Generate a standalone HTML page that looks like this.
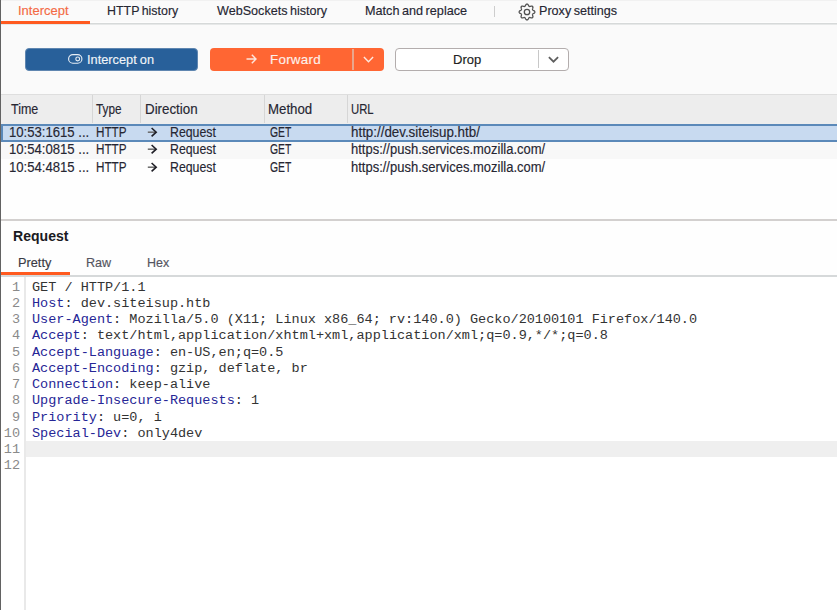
<!DOCTYPE html>
<html><head><meta charset="utf-8">
<style>
*{margin:0;padding:0;box-sizing:border-box}
html,body{width:837px;height:610px;overflow:hidden;background:#fafafa;font-family:"Liberation Sans",sans-serif;color:#262632}
.a{position:absolute;white-space:nowrap}
#lb{left:0;top:0;width:1px;height:610px;background:#626262}
.tab{font-size:13px}
.btn{position:absolute;height:22px;border-radius:4px;font-size:13px}
.hdr{font-size:13.8px}
.cell{font-size:13.8px}
.code{font-family:"Liberation Mono",monospace;font-size:13.5px}
.bt{font-size:13px;line-height:13px;margin-top:1px;word-spacing:-0.5px}
.tab,.hdr,.cell,.sub{line-height:13px}
.tab,.hdr,.cell,.sub,.bt{-webkit-text-stroke:0.15px}
.sub{font-size:12.7px;margin-top:1px}
.hd2{font-size:15px;font-weight:bold;line-height:15px;color:#1a1a22}
#gut,#code{font-family:"Liberation Mono",monospace;font-size:13.53px;line-height:16.26px}
#gut{color:#8a8a8a}
.k{color:#262696}.v{color:#333}
</style></head><body>
<div class="a" id="lb"></div><div class="a" style="left:1px;top:0;width:836px;height:1px;background:#f1f1f1"></div>
<!-- top tabs -->
<div class="a tab" style="left:17.90px;top:4px;color:#f46a45;transform:scaleX(0.9985);transform-origin:0 0">Intercept</div>

<div class="a tab" style="left:107.04px;top:4px;word-spacing:-1px;transform:scaleX(0.9550);transform-origin:0 0">HTTP history</div>
<div class="a tab" style="left:216.80px;top:4px;word-spacing:-1px;transform:scaleX(0.9690);transform-origin:0 0">WebSockets history</div>
<div class="a tab" style="left:364.63px;top:4px;word-spacing:-1px;transform:scaleX(0.9728);transform-origin:0 0">Match and replace</div>
<div class="a" style="left:494px;top:6px;width:1px;height:11px;background:#cdcdcd"></div>
<svg class="a" style="left:518px;top:3.2px" width="18" height="18" viewBox="0 0 18 18"><path d="M16.80 9.00 L16.79 9.31 L16.78 9.61 L16.52 9.89 L16.19 10.14 L15.82 10.36 L15.44 10.55 L15.09 10.72 L14.80 10.89 L14.72 11.11 L14.64 11.33 L14.54 11.55 L14.44 11.77 L14.52 12.09 L14.65 12.46 L14.78 12.86 L14.89 13.28 L14.95 13.69 L14.93 14.07 L14.73 14.29 L14.52 14.52 L14.29 14.73 L14.07 14.93 L13.69 14.95 L13.28 14.89 L12.86 14.78 L12.46 14.65 L12.09 14.52 L11.77 14.44 L11.55 14.54 L11.33 14.64 L11.11 14.72 L10.89 14.80 L10.72 15.09 L10.55 15.44 L10.36 15.82 L10.14 16.19 L9.89 16.52 L9.61 16.78 L9.31 16.79 L9.00 16.80 L8.69 16.79 L8.39 16.78 L8.11 16.52 L7.86 16.19 L7.64 15.82 L7.45 15.44 L7.28 15.09 L7.11 14.80 L6.89 14.72 L6.67 14.64 L6.45 14.54 L6.23 14.44 L5.91 14.52 L5.54 14.65 L5.14 14.78 L4.72 14.89 L4.31 14.95 L3.93 14.93 L3.71 14.73 L3.48 14.52 L3.27 14.29 L3.07 14.07 L3.05 13.69 L3.11 13.28 L3.22 12.86 L3.35 12.46 L3.48 12.09 L3.56 11.77 L3.46 11.55 L3.36 11.33 L3.28 11.11 L3.20 10.89 L2.91 10.72 L2.56 10.55 L2.18 10.36 L1.81 10.14 L1.48 9.89 L1.22 9.61 L1.21 9.31 L1.20 9.00 L1.21 8.69 L1.22 8.39 L1.48 8.11 L1.81 7.86 L2.18 7.64 L2.56 7.45 L2.91 7.28 L3.20 7.11 L3.28 6.89 L3.36 6.67 L3.46 6.45 L3.56 6.23 L3.48 5.91 L3.35 5.54 L3.22 5.14 L3.11 4.72 L3.05 4.31 L3.07 3.93 L3.27 3.71 L3.48 3.48 L3.71 3.27 L3.93 3.07 L4.31 3.05 L4.72 3.11 L5.14 3.22 L5.54 3.35 L5.91 3.48 L6.23 3.56 L6.45 3.46 L6.67 3.36 L6.89 3.28 L7.11 3.20 L7.28 2.91 L7.45 2.56 L7.64 2.18 L7.86 1.81 L8.11 1.48 L8.39 1.22 L8.69 1.21 L9.00 1.20 L9.31 1.21 L9.61 1.22 L9.89 1.48 L10.14 1.81 L10.36 2.18 L10.55 2.56 L10.72 2.91 L10.89 3.20 L11.11 3.28 L11.33 3.36 L11.55 3.46 L11.77 3.56 L12.09 3.48 L12.46 3.35 L12.86 3.22 L13.28 3.11 L13.69 3.05 L14.07 3.07 L14.29 3.27 L14.52 3.48 L14.73 3.71 L14.93 3.93 L14.95 4.31 L14.89 4.72 L14.78 5.14 L14.65 5.54 L14.52 5.91 L14.44 6.23 L14.54 6.45 L14.64 6.67 L14.72 6.89 L14.80 7.11 L15.09 7.28 L15.44 7.45 L15.82 7.64 L16.19 7.86 L16.52 8.11 L16.78 8.39 L16.79 8.69Z" fill="none" stroke="#505050" stroke-width="1.25" stroke-linejoin="round"/><circle cx="9" cy="9" r="2.7" fill="none" stroke="#505050" stroke-width="1.3"/></svg>
<div class="a tab" style="left:539.43px;top:4px;word-spacing:-1px;transform:scaleX(0.9683);transform-origin:0 0">Proxy settings</div>
<div class="a" style="left:1px;top:22px;width:836px;height:1px;background:#fdfdfd"></div><div class="a" style="left:1px;top:23px;width:836px;height:1px;background:#d6d9d9"></div><div class="a" style="left:1px;top:24px;width:836px;height:1px;background:#e6e8e8"></div><div class="a" style="left:1px;top:21px;width:89px;height:3px;background:#ff5a1f"></div>

<!-- buttons -->
<div class="btn" style="left:25px;top:48px;width:173px;height:22.5px;background:#28609a;border:1px solid #5f86b0"></div>
<div class="btn" style="left:210px;top:48px;width:174px;height:22.5px;background:#ff6633"></div>
<div class="a" style="left:352px;top:49px;width:2px;height:21px;background:#e9a68d"></div>
<div class="btn" style="left:395px;top:48px;width:174px;height:22.5px;background:#fff;border:1px solid #b3adad"></div>
<div class="a" style="left:538px;top:50px;width:1px;height:18px;background:#c8c8c8"></div>

<!-- table header -->
<div class="a" style="left:1px;top:94px;width:836px;height:30px;background:#ededed;border-top:1px solid #dedede"></div>
<div class="a" style="left:92px;top:95px;width:1px;height:28px;background:#d6d6d6"></div>
<div class="a" style="left:140px;top:95px;width:1px;height:28px;background:#d6d6d6"></div>
<div class="a" style="left:264px;top:95px;width:1px;height:28px;background:#d6d6d6"></div>
<div class="a" style="left:347px;top:95px;width:1px;height:28px;background:#d6d6d6"></div>

<!-- rows -->
<div class="a" style="left:1px;top:124px;width:837px;height:18px;background:#c8daf0;border:2px solid #5b89b9;border-right:0"></div>
<div class="a" style="left:1px;top:142px;width:836px;height:17px;background:#f8f8f8"></div>
<div class="a" style="left:1px;top:159px;width:836px;height:60px;background:#fefefe"></div>
<div class="a" style="left:1px;top:219px;width:836px;height:2px;background:#d3d0cf"></div>

<!-- request section -->
<div class="a" style="left:1px;top:221px;width:836px;height:54px;background:#fefefe"></div>
<div class="a hd2" style="left:12.86px;top:228px;transform:scaleX(0.9367);transform-origin:0 0">Request</div>

<div class="a" style="left:1px;top:275px;width:836px;height:2px;background:#d6d9da"></div>
<div class="a" style="left:1px;top:277px;width:836px;height:333px;background:#fff"></div>
<div class="a" style="left:24px;top:277px;width:2px;height:333px;background:#e9e9e9"></div>
<div class="a" style="left:1px;top:272.4px;width:69px;height:2.6px;background:#ff5a1f"></div>
<div class="a" style="left:26px;top:441px;width:811px;height:16px;background:#efefef"></div>

<!-- button contents -->
<svg class="a" style="left:68px;top:54.3px" width="15" height="10" viewBox="0 0 15 10"><rect x="0.6" y="0.6" width="13.3" height="8.6" rx="4.3" fill="none" stroke="#e6edf5" stroke-width="1.15"/><circle cx="9.7" cy="4.9" r="1.9" fill="none" stroke="#e6edf5" stroke-width="1.15"/></svg>
<div class="a bt" style="left:87.02px;top:52px;color:#f0f4f8;transform:scaleX(0.9832);transform-origin:0 0">Intercept on</div>
<svg class="a" style="left:246px;top:54px" width="11" height="10" viewBox="0 0 11 10"><path d="M0.5 5H10M5.8 0.8l4.2 4.2-4.2 4.2" fill="none" stroke="#fde5dc" stroke-width="1.45"/></svg>
<div class="a bt" style="left:270px;top:52px;color:#fdf0ea;font-size:13.4px;letter-spacing:0.25px">Forward</div>
<svg class="a" style="left:363px;top:56px" width="11" height="7" viewBox="0 0 11 7"><path d="M0.9 1.1l4.6 4.6L10.1 1.1" fill="none" stroke="#fde9e0" stroke-width="1.45"/></svg>
<div class="a bt" style="left:452.80px;top:52px;color:#222;transform:scaleX(1.0020);transform-origin:0 0">Drop</div>
<svg class="a" style="left:548px;top:56px" width="11" height="7" viewBox="0 0 11 7"><path d="M0.9 1.1l4.6 4.6L10.1 1.1" fill="none" stroke="#5e5e5e" stroke-width="1.75"/></svg>

<!-- header text -->
<div class="a hdr" style="left:10.90px;top:103px;transform:scaleX(0.9057);transform-origin:0 0">Time</div>
<div class="a hdr" style="left:96.20px;top:103px;transform:scaleX(0.8532);transform-origin:0 0">Type</div>
<div class="a hdr" style="left:144.93px;top:103px;transform:scaleX(0.9665);transform-origin:0 0">Direction</div>
<div class="a hdr" style="left:268.44px;top:103px;transform:scaleX(0.9606);transform-origin:0 0">Method</div>
<div class="a hdr" style="left:350.58px;top:103px;transform:scaleX(0.8207);transform-origin:0 0">URL</div>

<!-- row text -->
<div class="a cell" style="left:9.05px;top:126px;transform:scaleX(0.9509);transform-origin:0 0">10:53:1615 ...</div>
<div class="a cell" style="left:95.65px;top:126px;transform:scaleX(0.8472);transform-origin:0 0">HTTP</div>
<svg class="a" style="left:146.5px;top:127px" width="11" height="11" viewBox="0 0 11 11"><path d="M0.8 5.2H9" stroke="#6a6a6a" stroke-width="1.5" fill="none"/><path d="M4.6 1L9.2 5.2L4.6 9.4" stroke="#1e1e26" stroke-width="1.6" fill="none"/></svg>
<div class="a cell" style="left:170.01px;top:126px;transform:scaleX(0.8921);transform-origin:0 0">Request</div>
<div class="a cell" style="left:269.50px;top:126px;transform:scaleX(0.7534);transform-origin:0 0">GET</div>
<div class="a cell" style="left:351.40px;top:126px;transform:scaleX(0.9673);transform-origin:0 0">http://dev.siteisup.htb/</div>

<div class="a cell" style="left:9.05px;top:143px;transform:scaleX(0.9509);transform-origin:0 0">10:54:0815 ...</div>
<div class="a cell" style="left:95.65px;top:143px;transform:scaleX(0.8472);transform-origin:0 0">HTTP</div>
<svg class="a" style="left:146.5px;top:144px" width="11" height="11" viewBox="0 0 11 11"><path d="M0.8 5.2H9" stroke="#6a6a6a" stroke-width="1.5" fill="none"/><path d="M4.6 1L9.2 5.2L4.6 9.4" stroke="#1e1e26" stroke-width="1.6" fill="none"/></svg>
<div class="a cell" style="left:170.01px;top:143px;transform:scaleX(0.8921);transform-origin:0 0">Request</div>
<div class="a cell" style="left:269.50px;top:143px;transform:scaleX(0.7534);transform-origin:0 0">GET</div>
<div class="a cell" style="left:351.40px;top:143px;transform:scaleX(0.9413);transform-origin:0 0">https://push.services.mozilla.com/</div>

<div class="a cell" style="left:9.05px;top:161px;transform:scaleX(0.9509);transform-origin:0 0">10:54:4815 ...</div>
<div class="a cell" style="left:95.65px;top:161px;transform:scaleX(0.8472);transform-origin:0 0">HTTP</div>
<svg class="a" style="left:146.5px;top:162px" width="11" height="11" viewBox="0 0 11 11"><path d="M0.8 5.2H9" stroke="#6a6a6a" stroke-width="1.5" fill="none"/><path d="M4.6 1L9.2 5.2L4.6 9.4" stroke="#1e1e26" stroke-width="1.6" fill="none"/></svg>
<div class="a cell" style="left:170.01px;top:161px;transform:scaleX(0.8921);transform-origin:0 0">Request</div>
<div class="a cell" style="left:269.50px;top:161px;transform:scaleX(0.7534);transform-origin:0 0">GET</div>
<div class="a cell" style="left:351.40px;top:161px;transform:scaleX(0.9413);transform-origin:0 0">https://push.services.mozilla.com/</div>

<!-- subtabs -->
<div class="a sub" style="left:17.99px;top:256px;color:#3a3a44;transform:scaleX(1.0063);transform-origin:0 0">Pretty</div>
<div class="a sub" style="left:86.01px;top:256px;color:#555560;transform:scaleX(0.9913);transform-origin:0 0">Raw</div>
<div class="a sub" style="left:146.71px;top:256px;color:#555560;transform:scaleX(0.9857);transform-origin:0 0">Hex</div>

<!-- code -->
<div class="a" id="gut" style="left:0;top:279.5px;width:20px;text-align:right">1<br>2<br>3<br>4<br>5<br>6<br>7<br>8<br>9<br>10<br>11<br>12</div>
<div class="a" id="code" style="left:32px;top:279.5px"><span class="v">GET / HTTP/1.1</span><br><span class="k">Host</span><span class="v">: dev.siteisup.htb</span><br><span class="k">User-Agent</span><span class="v">: Mozilla/5.0 (X11; Linux x86_64; rv:140.0) Gecko/20100101 Firefox/140.0</span><br><span class="k">Accept</span><span class="v">: text/html,application/xhtml+xml,application/xml;q=0.9,*/*;q=0.8</span><br><span class="k">Accept-Language</span><span class="v">: en-US,en;q=0.5</span><br><span class="k">Accept-Encoding</span><span class="v">: gzip, deflate, br</span><br><span class="k">Connection</span><span class="v">: keep-alive</span><br><span class="k">Upgrade-Insecure-Requests</span><span class="v">: 1</span><br><span class="k">Priority</span><span class="v">: u=0, i</span><br><span class="k">Special-Dev</span><span class="v">: only4dev</span><br><br></div>
</body></html>
